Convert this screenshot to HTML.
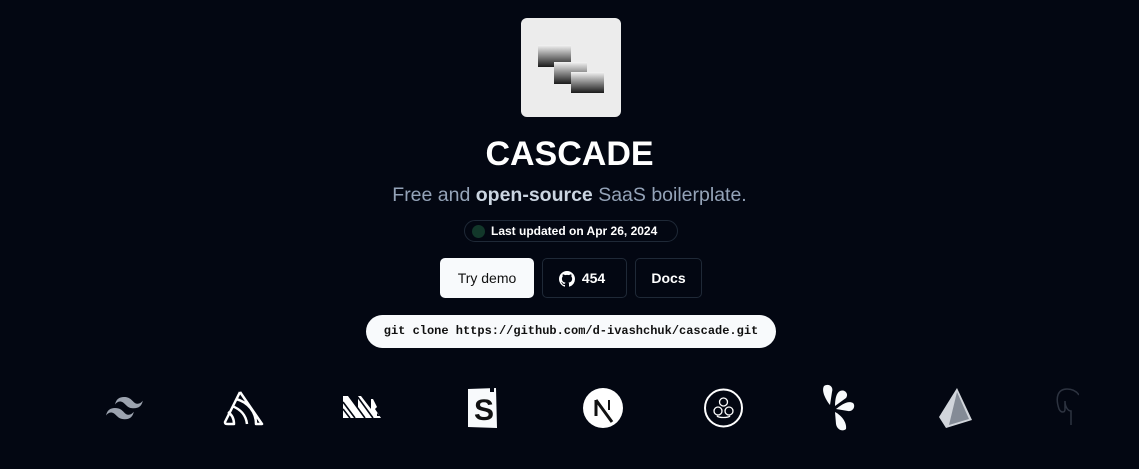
<!DOCTYPE html>
<html><head><style>
*{margin:0;padding:0;box-sizing:border-box}
body{width:1139px;height:469px;background:#030712;font-family:"Liberation Sans",sans-serif;position:relative;overflow:hidden;color:#fff}
.abs{position:absolute}
.logo{left:521px;top:18px;width:100px;height:99px;background:#ececec;border-radius:6px}
.r{position:absolute;width:33px;height:22px;background:linear-gradient(#f4f4f4,#1a1a1a)}
h1{position:absolute;top:135px;left:0;width:1139px;text-align:center;font-size:34px;font-weight:700}
.sub{top:184px;left:0;width:1139px;text-align:center;font-size:19.5px;color:#94a3b8}
.sub b{color:#cbd5e1}
.badge{left:464px;top:220px;width:214px;height:22px;border:1px solid #1f2937;border-radius:11px;font-size:12px;font-weight:700;line-height:20px;padding-left:26px}
.dot{position:absolute;left:7px;top:4px;width:13px;height:13px;border-radius:50%;background:#12372a}
.btn{top:258px;height:40px;border:1px solid #1f2937;border-radius:5px;font-size:14px;font-weight:700;line-height:38px;text-align:center}
.code{left:366px;top:315px;width:410px;height:33px;background:#f8fafc;border-radius:17px;color:#111;font-family:"Liberation Mono",monospace;font-size:12px;font-weight:700;line-height:33px;text-align:center}
svg{position:absolute}
</style></head><body>
<div class="abs logo">
<div class="r" style="left:17px;top:27px"></div>
<div class="r" style="left:33px;top:44px"></div>
<div class="r" style="left:50px;top:54px;height:21px"></div>
</div>
<h1>CASCADE</h1>
<div class="abs sub">Free and <b>open-source</b> SaaS boilerplate.</div>
<div class="abs badge"><span class="dot"></span>Last updated on Apr 26, 2024</div>
<div class="abs btn" style="left:440px;width:94px;background:#f8fafc;color:#111;border-color:#f8fafc;font-weight:400">Try demo</div>
<div class="abs btn" style="left:542px;width:85px;padding-left:18px">454
<svg style="left:16px;top:12px" width="16" height="16" viewBox="0 0 16 16"><path fill="#fff" d="M8 0C3.58 0 0 3.58 0 8c0 3.540 2.29 6.53 5.47 7.59.4.07.55-.17.55-.38v-1.33c-2.22.48-2.690-1.07-2.690-1.07-.36-.92-.89-1.170-.89-1.170-.73-.5.05-.49.05-.49.8.06 1.23.83 1.23.83.71 1.22 1.87.87 2.33.66.07-.52.28-.87.51-1.070-1.78-.2-3.64-.89-3.64-3.950 0-.87.31-1.59.82-2.150-.08-.2-.36-1.020.08-2.120 0 0 .67-.21 2.2.82a7.6 7.6 0 014 0c1.53-1.040 2.2-.82 2.2-.82.44 1.1.16 1.92.08 2.12.51.56.82 1.27.82 2.150 0 3.070-1.87 3.750-3.65 3.950.29.25.54.73.54 1.48v2.2c0 .21.15.46.55.38A8 8 0 0016 8c0-4.42-3.58-8-8-8z"/></svg></div>
<div class="abs btn" style="left:635px;width:67px">Docs</div>
<div class="abs code">git clone https://github.com/d-ivashchuk/cascade.git</div>

<svg style="left:103px;top:395px" width="42" height="26" viewBox="0 0 42 26"><path fill="#9ca3af" d="M21 2c-5 0-8 2.5-9 7.5 2-2.5 4-3.4 6.5-2.8 1.4.4 2.5 1.4 3.6 2.6 1.8 1.9 4 4 8.7 4 5 0 8-2.5 9-7.5-2 2.5-4 3.4-6.5 2.8-1.4-.4-2.5-1.4-3.6-2.6C27.9 4.1 25.7 2 21 2zM12 13c-5 0-8 2.5-9 7.5 2-2.5 4-3.4 6.5-2.8 1.4.4 2.5 1.4 3.6 2.6 1.8 1.9 4 4 8.7 4 5 0 8-2.5 9-7.5-2 2.5-4 3.4-6.5 2.8-1.4-.4-2.5-1.4-3.6-2.6C18.9 15.1 16.7 13 12 13z"/></svg>
<svg style="left:223px;top:390px" width="42" height="36" viewBox="0 0 42 36"><path fill="none" stroke="#fff" stroke-width="2.5" stroke-linejoin="round" d="M17 2 L39 34 H33 C33 22 25 12 13 9 M17 2 L2 32 c0 2 1 2 3 2 h6 c0-6-3-10-6-12 M9 16 c8 3 14 9 15 18"/></svg>
<svg style="left:343px;top:396px" width="42" height="24" viewBox="0 0 42 24"><path fill="#fff" d="M0 0h5l10 13V0h3l10 13V3h2l4 8-2 2 6 9H0z"/><path stroke="#030712" stroke-width="1.6" d="M0 6l12 16M0 13l7 9M6 0l16 22M14 0l16 22"/><path fill="#030712" d="M34 17l3 3h-3z"/></svg>
<svg style="left:466px;top:387px" width="34" height="42" viewBox="0 0 34 42"><path fill="#f8fafc" d="M2 2l28-1 1 40-29-1z"/><path fill="#030712" d="M24 0h4v5h-4z"/><text x="8" y="33" font-family="Liberation Sans" font-weight="700" font-size="30" fill="#111">S</text></svg>
<svg style="left:583px;top:388px" width="40" height="40" viewBox="0 0 40 40"><circle cx="20" cy="20" r="20" fill="#fff"/><path d="M13 12v16M13 12l16 22" stroke="#111" stroke-width="3"/><path d="M26 12v10" stroke="#111" stroke-width="2"/></svg>
<svg style="left:703px;top:388px" width="41" height="40" viewBox="0 0 41 40"><circle cx="20.5" cy="20" r="18.5" fill="none" stroke="#fff" stroke-width="2"/><g fill="none" stroke="#fff" stroke-width="1.3"><circle cx="20.5" cy="14" r="4"/><circle cx="15" cy="23" r="4"/><circle cx="26" cy="23" r="4"/><path d="M14 28c2 2 11 2 13 0"/></g></svg>
<svg style="left:820px;top:383px" width="38" height="50" viewBox="0 0 38 50"><g fill="#f8fafc"><path d="M4 3c4-3 10 0 8 6l-2 13C6 17 1 8 4 3z"/><path d="M20 8c5-2 9 3 6 7l-11 8c0-6 1-13 5-15z"/><path d="M33 20c3 3 0 9-5 8l-12-2c5-4 12-9 17-6z"/><path d="M26 46c-3 3-9 1-10-5l-1-12c6 3 12 10 11 17z"/></g></svg>
<svg style="left:937px;top:386px" width="38" height="44" viewBox="0 0 38 44"><path fill="#d1d5db" d="M20 2L2 31l7 11 26-8z"/><path fill="#374151" d="M20 6l-8 33 20-6z" opacity=".5"/></svg>
<svg style="left:1055px;top:387px" width="24" height="40" viewBox="0 0 24 40"><path fill="none" stroke="#2d3340" stroke-width="1.5" d="M12 2c-9 0-12 8-8 20 2 4 6 4 6 0v-8c0 6 3 10 6 10v14M12 2c6 0 10 3 12 6"/></svg>
</body></html>
